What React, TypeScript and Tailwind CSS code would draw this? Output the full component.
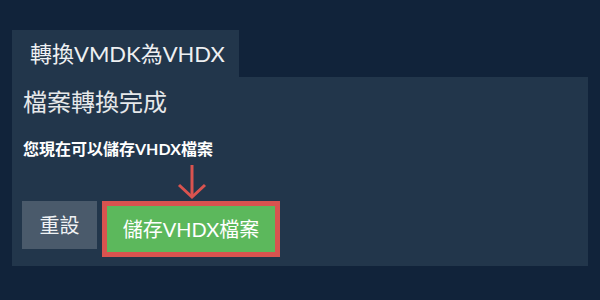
export default function App() {
  const font = { fontFamily: 'Lato, "Noto Sans CJK TC", sans-serif' };
  return (
    <div className="w-[600px] h-[300px] bg-[#11233a] pt-[30px] px-[12px] text-[#eef0f2]" style={font}>
      <div className="w-[227px] h-[47px] bg-[#22364b] pl-[18px] flex items-center text-[22px] leading-none">
        轉換VMDK為VHDX
      </div>
      <div className="h-[189px] bg-[#22364b] pl-[10px] pt-[10px]">
        <div className="ml-px text-[24px] leading-[30px] text-[#e6e8ea]">檔案轉換完成</div>
        <div className="ml-px mt-[22px] text-[16px] leading-[20px] font-bold text-white">您現在可以儲存VHDX檔案</div>
        <div className="ml-[155px] mt-[5px] h-[36px] w-[30px]">
          <svg width="30" height="36" viewBox="0 0 30 36" fill="none" stroke="#d9534f" strokeWidth="3">
            <line x1="15" y1="1" x2="15" y2="33" />
            <polyline points="2,21 15,33 28,21" />
          </svg>
        </div>
        <div className="flex items-start gap-[5px] mt-[1px]">
          <button className="w-[75px] h-[48px] bg-[#4a5a6b] text-[20px] text-[#f0f2f4] flex items-center justify-center">
            重設
          </button>
          <div className="border-[5px] border-[#d9534f]">
            <button className="w-[168px] h-[46px] bg-[#5cb85c] text-[20px] text-white flex items-center justify-center">
              儲存VHDX檔案
            </button>
          </div>
        </div>
      </div>
    </div>
  );
}
